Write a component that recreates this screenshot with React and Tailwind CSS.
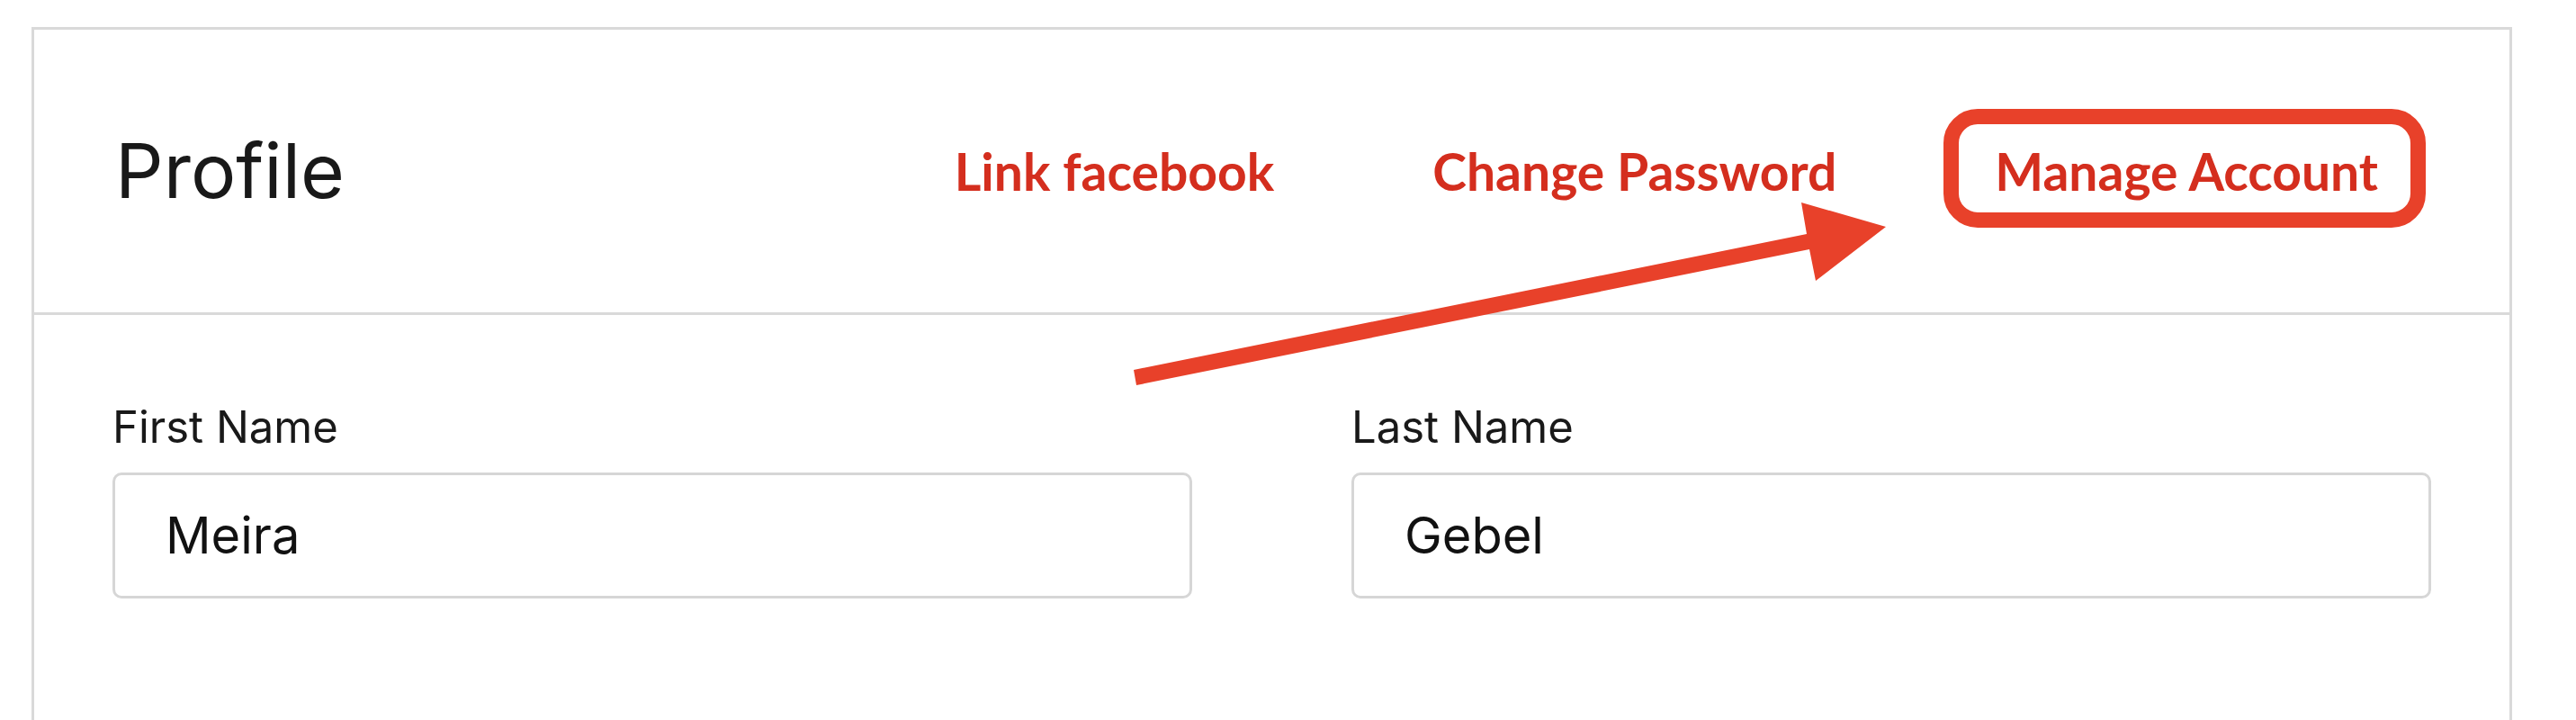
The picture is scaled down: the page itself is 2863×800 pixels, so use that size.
export default function App() {
  return (
    <div className="relative h-[800px] w-full overflow-hidden bg-white" style={{ fontFamily: "Inter, Lato, sans-serif" }}>
      <div className="ml-[35px] mt-[30px] w-[2757px] border-[3px] border-b-0 border-[#d9d9d9] h-[800px]">
        <div className="flex h-[317px] items-center justify-between border-b-[3px] border-[#d9d9d9] pl-[90px] pr-[146px]">
          <h1 className="text-[84px] font-normal leading-none text-[#191919] [font-variant-ligatures:none]">Profile</h1>
          <div className="flex items-center gap-[176px] font-['Lato'] text-[57px] font-bold leading-none text-[#d42e1e]">
            <span>Link facebook</span>
            <span>Change Password</span>
            <span>Manage Account</span>
          </div>
        </div>
        <div className="grid grid-cols-2 gap-[177px] px-[87px] pt-[100px]">
          <div className="flex flex-col">
            <label className="text-[49px] leading-none text-[#191919]">First Name</label>
            <div className="mt-[26px] flex h-[140px] items-center rounded-[10px] border-[3px] border-[#d6d6d6] px-[56px] text-[56px] text-[#111]">
              Meira
            </div>
          </div>
          <div className="flex flex-col">
            <label className="text-[49px] leading-none text-[#191919]">Last Name</label>
            <div className="mt-[26px] flex h-[140px] items-center rounded-[10px] border-[3px] border-[#d6d6d6] px-[56px] text-[56px] text-[#111]">
              Gebel
            </div>
          </div>
        </div>
      </div>
      <div className="pointer-events-none absolute left-[2160px] top-[121px] h-[132px] w-[536px] rounded-[38px] border-[17px] border-[#e8412a]" />
      <svg className="pointer-events-none absolute left-0 top-0" width="2863" height="800" viewBox="0 0 2863 800">
        <polygon
          fill="#e8412a"
          points="1260,411 2008,260 2002,225 2096,252 2018,312 2011,277 1263,428"
        />
      </svg>
    </div>
  );
}
